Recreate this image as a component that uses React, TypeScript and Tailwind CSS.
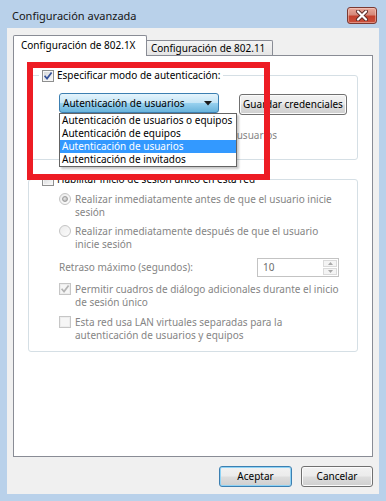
import React from "react";

function Check({ checked = false, disabled = false }: { checked?: boolean; disabled?: boolean }) {
  return (
    <span
      className={
        "relative flex h-[12px] w-[12px] shrink-0 items-center justify-center border " +
        (disabled ? "border-[#c6c6c6] bg-[#f6f6f6]" : "border-[#8e8f8f] bg-[linear-gradient(135deg,#d4d6d8,#fafafa)]")
      }
    >
      <span className={"absolute inset-0 border " + (disabled ? "border-[#ededed]" : "border-[#f6f6f6]")} />
      {checked && (
        <svg width="10" height="10" viewBox="0 0 10 10" className="relative">
          <path
            d="M1.6 4.8 L4 7.6 L8.6 1.4"
            fill="none"
            stroke={disabled ? "#b4b4b4" : "#35529a"}
            strokeWidth="1.7"
          />
        </svg>
      )}
    </span>
  );
}

function Radio({ checked = false }: { checked?: boolean }) {
  return (
    <span className="flex h-[12px] w-[12px] shrink-0 items-center justify-center rounded-full border border-[#c4c4c4] bg-[linear-gradient(135deg,#ececec,#fbfbfb)]">
      {checked && (
        <span className="h-[6px] w-[6px] rounded-full border border-[#9c9c9c] bg-[radial-gradient(circle_at_40%_40%,#e6e6e6,#a8a8a8)]" />
      )}
    </span>
  );
}

function Button({
  children,
  w,
  primary = false,
}: {
  children: React.ReactNode;
  w: string;
  primary?: boolean;
}) {
  return (
    <div
      className={
        "flex h-[21px] items-center justify-center rounded-[3px] border bg-[linear-gradient(#f2f2f2_0%,#ebebeb_48%,#dddddd_52%,#cfcfcf_100%)] text-[10px] leading-[13px] text-black " +
        w +
        (primary
          ? " border-[#3c7fb1] shadow-[inset_0_0_0_1px_#8fd3f5]"
          : " border-[#707070] shadow-[inset_0_0_0_1px_#fbfbfb]")
      }
    >
      {children}
    </div>
  );
}

export default function App() {
  const gray = "text-[#858585]";
  return (
    <div className="flex h-[501px] w-[386px] flex-col bg-[#b9d1ea] font-['Noto_Sans',sans-serif] text-[10px] leading-[13px] text-black">
      {/* Title bar */}
      <div className="flex h-[28px] items-start pl-[12px] pr-[9px]">
        <span className="mt-[9px] text-[11px] leading-[14px] text-[#161616]">Configuración avanzada</span>
        <div className="ml-auto mt-[7px] flex h-[17px] w-[30px] items-center justify-center rounded-[3px] border border-[#7a3a33] bg-[linear-gradient(#e9a99b_0%,#d58a7b_45%,#c4412d_55%,#c9503c_100%)] shadow-[inset_0_0_0_1px_rgba(255,220,210,0.45)]">
          <svg width="14" height="11" viewBox="0 0 14 11">
            <path d="M3 1.5 L11 9.5 M11 1.5 L3 9.5" stroke="#5a2b28" strokeWidth="4" strokeLinecap="round" />
            <path d="M3 1.5 L11 9.5 M11 1.5 L3 9.5" stroke="#ffffff" strokeWidth="2.2" strokeLinecap="round" />
          </svg>
        </div>
      </div>

      {/* Client area */}
      <div className="mx-[7px] mb-[7px] flex h-[466px] flex-col bg-[#f0f0f0] px-[6px] pt-[7px]">
        {/* Tabs */}
        <div className="flex h-[21px] items-end">
          <div className="relative z-10 flex h-[21px] w-[134px] items-center rounded-t-[2px] border border-b-0 border-[#898c95] bg-white pb-[1px] pl-[7px]">
            Configuración de 802.1X
          </div>
          <div className="flex h-[16px] w-[126px] items-center rounded-tr-[2px] border border-b-0 border-l-0 border-[#898c95] bg-[linear-gradient(#f4f4f4,#e4e4e4)] pl-[4px]">
            Configuración de 802.11
          </div>
        </div>

        {/* Panel */}
        <div className="relative -mt-px h-[402px] border border-[#898c95] bg-white pl-[14px] pr-[14px] pt-[13px]">
          {/* Group 1 */}
          <fieldset className="rounded-[3px] border border-[#d5dfe5] pb-[17px]">
            <legend className="ml-[10px] px-[3px]">
              <span className="flex h-[13px] items-center gap-[3px]">
                <Check checked />
                <span>Especificar modo de autenticación:</span>
              </span>
            </legend>
            <div className="pl-[30px]">
              <div className="mt-[11px] flex items-start">
                <div className="relative flex h-[20px] w-[160px] items-center rounded-[3px] border border-[#3c7fb1] bg-[linear-gradient(#e5f4fc_0%,#c4e5f6_50%,#98d1ef_51%,#68b3db_100%)] pl-[3px] pr-[6px]">
                  <span>Autenticación de usuarios</span>
                  <svg width="8" height="5" viewBox="0 0 8 5" className="ml-auto">
                    <path d="M0 0 L8 0 L4 4.5 Z" fill="#1a1a1a" />
                  </svg>
                  {/* open list */}
                  <div className="absolute left-[-1px] top-[19px] z-20 w-[178px] border border-[#646464] bg-white shadow-[2px_2px_2px_rgba(0,0,0,0.22)]">
                    <div className="h-[13px] pl-[2px] leading-[13px]">Autenticación de usuarios o equipos</div>
                    <div className="h-[13px] pl-[2px] leading-[13px]">Autenticación de equipos</div>
                    <div className="h-[13px] bg-[#3399ff] pl-[2px] leading-[13px] text-white">Autenticación de usuarios</div>
                    <div className="h-[13px] pl-[2px] leading-[13px]">Autenticación de invitados</div>
                  </div>
                </div>
                <div className="ml-[20px] mt-[1px]">
                  <Button w="w-[108px] h-[20px]">Guardar credenciales</Button>
                </div>
              </div>
              <div className={"mt-[14px] flex h-[13px] w-[218px] justify-end overflow-hidden whitespace-nowrap " + gray}>
                <span>Eliminar credenciales para todos los usuarios</span>
              </div>
            </div>
          </fieldset>

          {/* Group 2 */}
          <fieldset className="mt-[13px] rounded-[3px] border border-[#d5dfe5] pb-[9px]">
            <legend className="ml-[10px] px-[3px]">
              <span className="flex h-[13px] items-center gap-[3px]">
                <Check />
                <span>Habilitar inicio de sesión único en esta red</span>
              </span>
            </legend>
            <div className={"flex flex-col pl-[30px] " + gray}>
              <div className="mt-[7px] flex items-start gap-[4px]">
                <Radio checked />
                <span className="whitespace-nowrap">
                  Realizar inmediatamente antes de que el usuario inicie
                  <br />
                  sesión
                </span>
              </div>
              <div className="mt-[6px] flex items-start gap-[4px]">
                <Radio />
                <span className="whitespace-nowrap">
                  Realizar inmediatamente después de que el usuario
                  <br />
                  inicie sesión
                </span>
              </div>
              <div className="mt-[6px] flex h-[20px] items-center">
                <span className="w-[198px]">Retraso máximo (segundos):</span>
                <div className="flex h-[19px] w-[82px] border border-[#c3c3c3] bg-white">
                  <span className="flex-1 pl-[5px] leading-[17px] text-[#6d6d6d]">10</span>
                  <div className="flex w-[16px] flex-col gap-px p-px">
                    <div className="flex flex-1 items-center justify-center border border-[#dadada] bg-[#f4f4f4]">
                      <svg width="5" height="3" viewBox="0 0 5 3">
                        <path d="M0 3 L5 3 L2.5 0 Z" fill="#a8a8a8" />
                      </svg>
                    </div>
                    <div className="flex flex-1 items-center justify-center border border-[#dadada] bg-[#f4f4f4]">
                      <svg width="5" height="3" viewBox="0 0 5 3">
                        <path d="M0 0 L5 0 L2.5 3 Z" fill="#a8a8a8" />
                      </svg>
                    </div>
                  </div>
                </div>
              </div>
              <div className="mt-[6px] flex items-start gap-[4px]">
                <Check checked disabled />
                <span className="whitespace-nowrap">
                  Permitir cuadros de diálogo adicionales durante el inicio
                  <br />
                  de sesión único
                </span>
              </div>
              <div className="mt-[7px] flex items-start gap-[4px]">
                <Check disabled />
                <span className="whitespace-nowrap">
                  Esta red usa LAN virtuales separadas para la
                  <br />
                  autenticación de usuarios y equipos
                </span>
              </div>
            </div>
          </fieldset>

          {/* Red annotation frame */}
          <div className="pointer-events-none absolute left-[13px] top-[6px] z-30 h-[118px] w-[243px] border-[6px] border-[#ed1c24]" />
        </div>

        {/* Buttons */}
        <div className="mt-[9px] flex justify-end gap-[9px]">
          <Button w="w-[73px]" primary>
            Aceptar
          </Button>
          <Button w="w-[72px]">Cancelar</Button>
        </div>
      </div>
    </div>
  );
}
